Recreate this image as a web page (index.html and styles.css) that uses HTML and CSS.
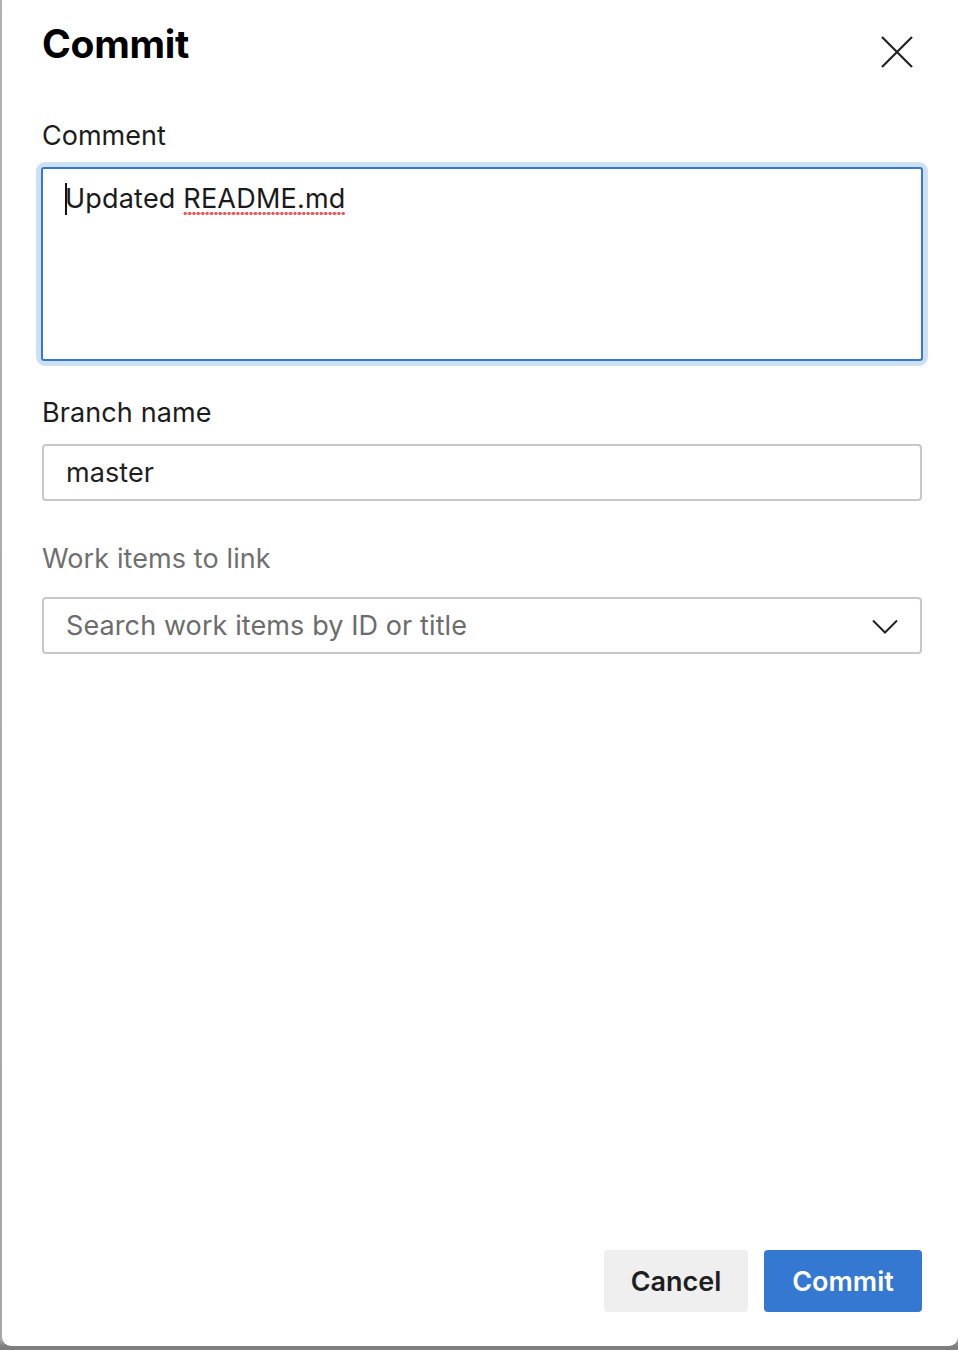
FILE: index.html
```html
<!DOCTYPE html>
<html lang="en">
<head>
<meta charset="utf-8">
<title>Commit</title>
<link rel="stylesheet" href="styles.css">
</head>
<body>
<div class="panel">
  <header class="header">
    <h1 class="title">Commit</h1>
    <button class="close" aria-label="Close">
      <svg width="32" height="32" viewBox="0 0 32 32"><path d="M1 1 L31 31 M31 1 L1 31" stroke="#222" stroke-width="2.2" fill="none"/></svg>
    </button>
  </header>

  <div class="field">
    <label class="label">Comment</label>
    <div class="ring">
      <div class="textarea"><span class="caret"></span>Updated <span class="spell">README.md</span></div>
    </div>
  </div>

  <div class="field field-branch">
    <label class="label">Branch name</label>
    <div class="input">master</div>
  </div>

  <div class="field field-work">
    <label class="label label-muted">Work items to link</label>
    <div class="input dropdown">
      <span class="placeholder">Search work items by ID or title</span>
      <svg class="chev" width="26" height="15" viewBox="0 0 26 15"><path d="M1 1.5 L13 13.5 L25 1.5" stroke="#222" stroke-width="2" fill="none"/></svg>
    </div>
  </div>

  <footer class="footer">
    <button class="btn btn-cancel">Cancel</button>
    <button class="btn btn-primary">Commit</button>
  </footer>
</div>
</body>
</html>
```

FILE: styles.css
```css
html {
  background: linear-gradient(to bottom, #b2b2b2 0, #a6a6a6 1340px, #7e7e7e 1346px, #7e7e7e 100%);
  height: 100%;
}
body {
  margin: 0;
  height: 1350px;
  font-family: Inter, "Noto Sans", "Liberation Sans", sans-serif;
  color: #1f1f1f;
  overflow: hidden;
}
.panel {
  margin-left: 2px;
  height: 1346px;
  box-sizing: border-box;
  background: #fff;
  border-radius: 0 0 9px 9px;
  padding: 20px 36px 34px 40px;
  display: flex;
  flex-direction: column;
}
.header {
  display: flex;
  justify-content: space-between;
  align-items: flex-start;
  height: 48px;
}
.title {
  margin: 0;
  font-size: 39px;
  line-height: 48px;
  font-weight: 700;
  letter-spacing: -0.3px;
  color: #000;
}
.close {
  margin: 16px 9px 0 0;
  padding: 0;
  border: 0;
  background: none;
  width: 32px;
  height: 32px;
  display: flex;
}
.field {
  display: flex;
  flex-direction: column;
}
.header + .field { margin-top: 51px; }
.label {
  font-size: 27px;
  line-height: 34px;
  margin-bottom: 15px;
  color: #1c1c1c;
}
.field-branch .label { margin-bottom: 14px; }
.label-muted { color: #6f6f6f; margin-bottom: 21px; }
.field-branch .label, .field-work .label { letter-spacing: 0.1px; }
.ring {
  margin: -6px -6px 0 -6px;
  padding: 4px;
  border-radius: 9px;
  background: #cde0f4;
}
.textarea {
  box-sizing: content-box;
  background: #fff;
  border: 2px solid #3577d1;
  border-radius: 3px;
  padding: 13px 22px 0 22px;
  font-size: 27px;
  line-height: 34px;
  color: #1a1a1a;
  display: flex;
  align-items: flex-start;
  margin: 1px;
  height: 177px;
  white-space: pre;
  letter-spacing: 0.2px;
}
.caret {
  display: inline-block;
  width: 2px;
  height: 32px;
  margin-top: 1px;
  margin-right: -2px;
  background: #111;
}
.spell {
  background-image: radial-gradient(circle, #ec5b57 1.6px, transparent 2px);
  background-size: 4.4px 5px;
  background-repeat: repeat-x;
  background-position: 0 29px;
  padding-bottom: 4px;
}
.field-branch { margin-top: 30px; }
.field-work { margin-top: 41px; }
.input {
  height: 53px;
  border: 2px solid #c8c8c8;
  border-radius: 4px;
  padding: 0 22px;
  font-size: 27px;
  line-height: 34px;
  display: flex;
  align-items: center;
  color: #1f1f1f;
  letter-spacing: 0.1px;
}
.dropdown {
  justify-content: space-between;
}
.placeholder { color: #6c6c6c; }
.chev { margin-right: 0px; margin-top: 1px; }
.footer {
  margin-top: auto;
  display: flex;
  justify-content: flex-end;
  gap: 16px;
}
.btn {
  height: 62px;
  border: 0;
  border-radius: 4px;
  font-family: Inter, "Noto Sans", "Liberation Sans", sans-serif;
  font-size: 27px;
  font-weight: 600;
  padding: 0;
}
.btn-cancel {
  width: 144px;
  background: #efefef;
  color: #1e1e1e;
}
.btn-primary {
  width: 158px;
  background: #3578d1;
  color: #fff;
}
```
